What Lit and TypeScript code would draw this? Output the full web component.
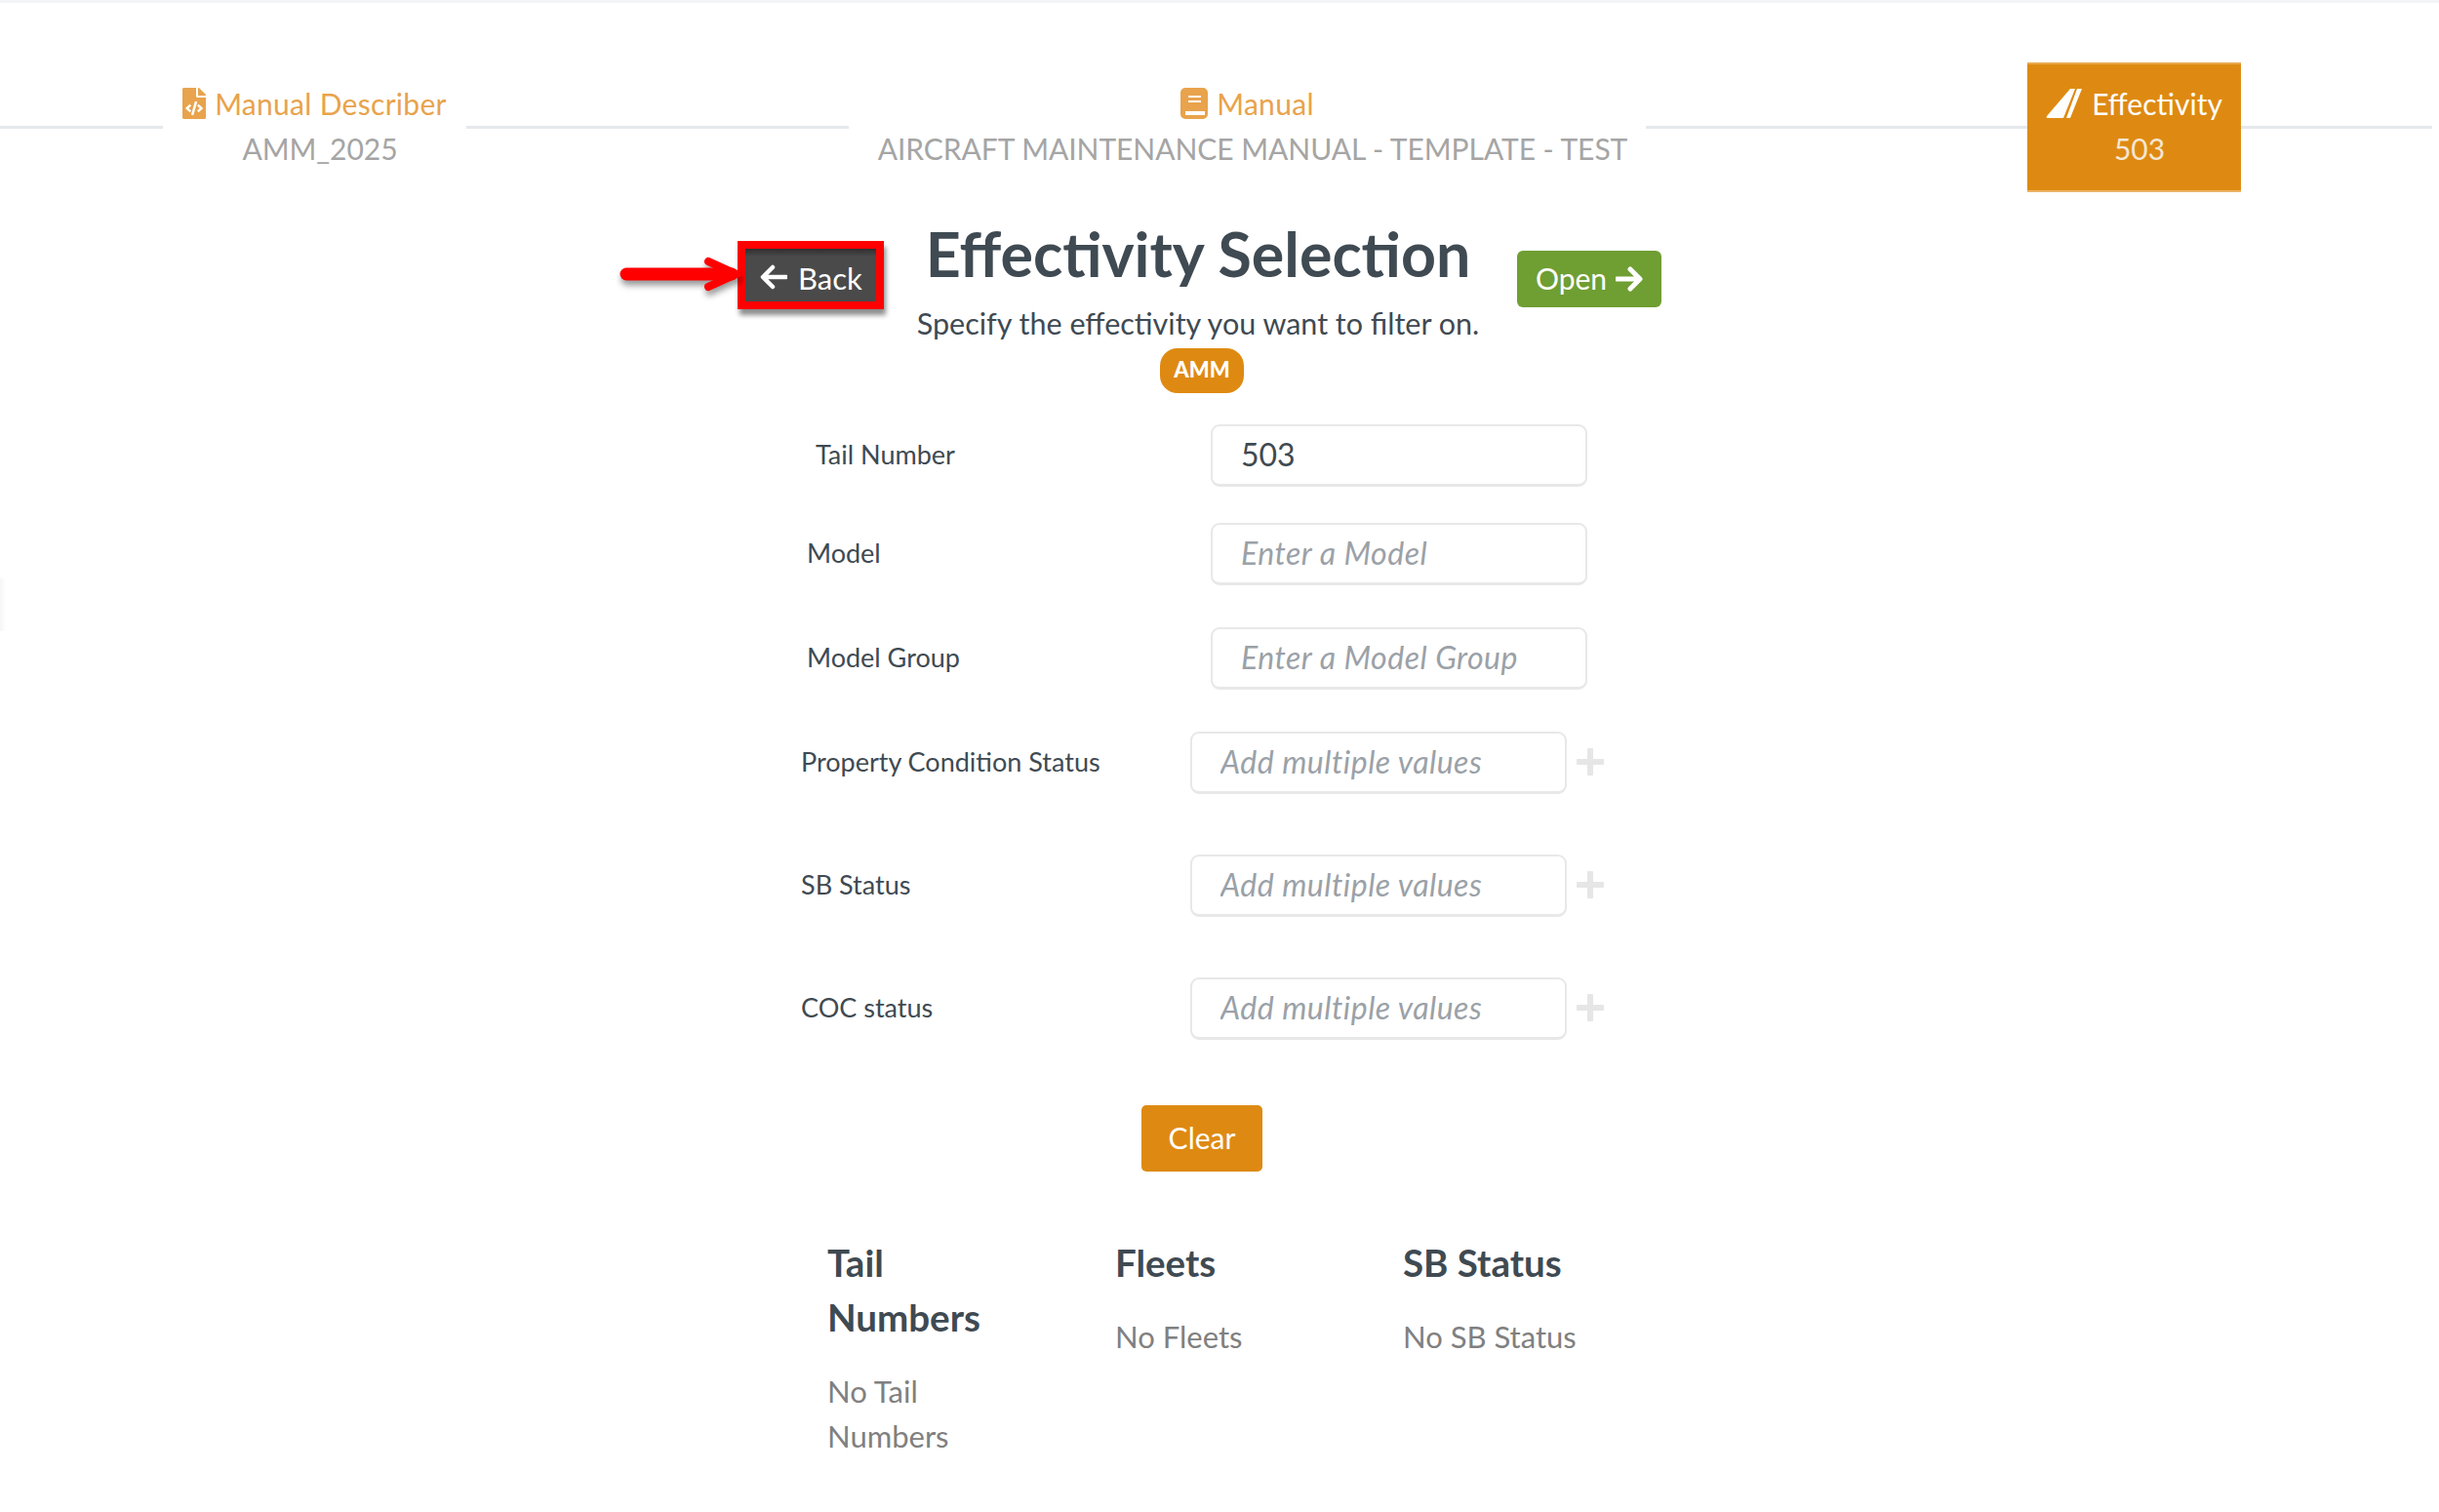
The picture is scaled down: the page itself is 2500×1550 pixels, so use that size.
import { LitElement, html, css, svg } from 'lit';
import { customElement } from 'lit/decorators.js';

const fileCode = svg`<path d="M384 121.941V128H256V0h6.059c6.365 0 12.47 2.529 16.971 7.029l97.941 97.941A24.005 24.005 0 0 1 384 121.941zM248 160c-13.2 0-24-10.8-24-24V0H24C10.745 0 0 10.745 0 24v464c0 13.255 10.745 24 24 24h336c13.255 0 24-10.745 24-24V160H248zM123.206 400.505a5.4 5.4 0 0 1-7.633.246l-64.866-60.812a5.4 5.4 0 0 1 0-7.879l64.866-60.812a5.4 5.4 0 0 1 7.633.246l19.579 20.885a5.4 5.4 0 0 1-.372 7.747L101.65 336l40.763 35.874a5.4 5.4 0 0 1 .372 7.747l-19.579 20.884zm51.295 50.479l-27.453-7.97a5.402 5.402 0 0 1-3.681-6.692l61.44-211.626a5.402 5.402 0 0 1 6.692-3.681l27.452 7.97a5.4 5.4 0 0 1 3.68 6.692l-61.44 211.626a5.397 5.397 0 0 1-6.69 3.681zm160.792-111.045l-64.866 60.812a5.4 5.4 0 0 1-7.633-.246l-19.58-20.885a5.4 5.4 0 0 1 .372-7.747L284.35 336l-40.763-35.874a5.4 5.4 0 0 1-.372-7.747l19.58-20.885a5.4 5.4 0 0 1 7.633-.246l64.866 60.812a5.4 5.4 0 0 1-.001 7.879z"/>`;

const multiFields = ['Property Condition Status', 'SB Status', 'COC status'];

@customElement('app-root')
export class AppRoot extends LitElement {
    static styles = css`
    :host {
      display: block;
      position: relative;
      min-height: 1550px;
      box-sizing: border-box;
      background: #fff;
      border-top: 3px solid #f3f4f5;
      font-family: Lato, "Liberation Sans", sans-serif;
      color: #3f4a52;
      overflow: hidden;
    }
    .edge-tab {
      position: absolute;
      left: 0;
      top: 590px;
      width: 6px;
      height: 54px;
      background: linear-gradient(to right, #f6f6f6, #fff);
    }
    .crumbs {
      display: flex;
      align-items: center;
      height: 133px;
      margin-top: 61px;
      width: 2493px;
    }
    .rule {
      height: 3px;
      background: #e5e9ec;
    }
    .crumb {
      display: flex;
      flex-direction: column;
      align-items: center;
      box-sizing: border-box;
      padding-bottom: 2px;
      font-size: 30px;
      line-height: 47px;
      color: #a5a5a5;
      white-space: nowrap;
    }
    .crumb-sub {
      padding-left: 11px;
      margin-top: -1px;
      letter-spacing: -0.05px;
    }
    .crumb-title {
      display: flex;
      align-items: center;
      gap: 9px;
      color: #e8a34c;
      letter-spacing: 0.3px;
    }
    .crumb-title svg {
      width: 24px;
      height: 32px;
      fill: #e8a34c;
      margin-top: -2px;
    }
    .crumb.active {
      height: 133px;
      justify-content: center;
      background: #de8a12;
      border-top: 2px solid #e9a94f;
      border-bottom: 2px solid #e9b465;
      color: #f4e6d2;
    }
    .crumb.active .crumb-title {
      color: #fff;
      letter-spacing: 0;
    }
    .crumb.active svg {
      width: 38px;
      height: 32px;
      fill: #fff;
    }
    .title-row {
      display: flex;
      align-items: flex-start;
      margin: 31px 0 0 756px;
    }
    .back-wrap {
      position: relative;
      margin-top: 19px;
    }
    .pointer {
      position: absolute;
      left: -121px;
      top: 14px;
      width: 124px;
      height: 40px;
      filter: drop-shadow(1px 5px 3px rgba(0, 0, 0, 0.4));
    }
    .back {
      display: flex;
      align-items: center;
      gap: 11px;
      box-sizing: border-box;
      width: 150px;
      height: 70px;
      padding: 4px 0 0 15px;
      border: 8px solid #f00;
      background: linear-gradient(#2f2f2f, #4a4a4a 8px);
      box-shadow: 2px 6px 5px rgba(0, 0, 0, 0.45);
      color: #fff;
      font-size: 31px;
    }
    .back span {
      margin-top: 2px;
    }
    .back svg,
    .open svg {
      width: 28px;
      height: 26px;
      flex: none;
    }
    .heading {
      width: 644px;
      padding-bottom: 3px;
      margin-top: -1px;
      text-align: center;
    }
    .heading h1 {
      margin: 0 0 15px;
      font-size: 62.7px;
      line-height: 66px;
      font-weight: 700;
    }
    .heading p {
      margin: 0;
      font-size: 30.5px;
      line-height: 46px;
    }
    .open {
      display: flex;
      align-items: center;
      justify-content: center;
      gap: 9px;
      box-sizing: border-box;
      width: 148px;
      height: 58px;
      margin: 29px 0 0 5px;
      padding-bottom: 3px;
      background: #6f9e32;
      border-radius: 6px;
      color: #fff;
      font-size: 30px;
    }
    .open svg {
      margin-top: 3px;
    }
    .badge-row {
      display: flex;
      justify-content: center;
      width: 2464px;
    }
    .badge {
      width: 86px;
      height: 46px;
      line-height: 43px;
      text-align: center;
      background: #de8a12;
      border-radius: 18px;
      color: #fff;
      font-size: 22px;
      font-weight: 900;
    }
    .form {
      display: flex;
      flex-direction: column;
      margin-top: 32px;
    }
    .field {
      display: flex;
      align-items: center;
      height: 64px;
      font-size: 27px;
    }
    .field label {
      flex: none;
      margin-top: -3px;
    }
    .tail { padding-left: 836px; margin-bottom: 37px; }
    .tail label { width: 405px; }
    .model { padding-left: 827px; margin-bottom: 43px; }
    .model label { width: 414px; }
    .multi { padding-left: 821px; margin-bottom: 62px; gap: 10px; }
    .multi:last-child { margin-bottom: 0; }
    .multi label { width: 389px; }
    input {
      box-sizing: border-box;
      width: 386px;
      height: 64px;
      padding: 0 29px 2px;
      border: 2px solid #e8e8e8;
      border-bottom-width: 3px;
      border-radius: 9px;
      outline: none;
      color: #3f4a52;
      font: 32px Lato, "Liberation Sans", sans-serif;
    }
    input::placeholder {
      color: #9ba1a7;
      font-style: italic;
      letter-spacing: 0.5px;
      opacity: 1;
    }
    .plus {
      width: 28px;
      height: 28px;
      fill: #e6e6e6;
      margin-top: -2px;
    }
    .clear-row {
      display: flex;
      justify-content: center;
      width: 2464px;
      margin-top: 67px;
    }
    .clear {
      width: 124px;
      height: 68px;
      line-height: 66px;
      text-align: center;
      background: #de8a12;
      border-radius: 5px;
      color: #fff;
      font-size: 30px;
    }
    .lists {
      display: grid;
      grid-template-columns: repeat(3, 295px);
      margin: 65px 0 0 848px;
    }
    .lists h3 {
      width: 200px;
      margin: 0 0 25px;
      font-size: 38.5px;
      line-height: 56px;
      font-weight: 700;
    }
    .lists p {
      width: 180px;
      margin: 0;
      font-size: 31px;
      line-height: 46px;
      color: #808080;
    }
    `;

    render() {
        return html`
      <div class="edge-tab"></div>
      <div class="crumbs">
        <div class="rule" style="width:167px"></div>
        <div class="crumb" style="width:311px">
          <div class="crumb-title">
            <svg viewBox="0 0 384 512">${fileCode}</svg>
            Manual Describer
          </div>
          <div class="crumb-sub">AMM_2025</div>
        </div>
        <div class="rule" style="width:392px"></div>
        <div class="crumb" style="width:817px">
          <div class="crumb-title">
            <svg viewBox="0 0 28 32" style="width:28px">
              <path fill-rule="evenodd" d="M5 0h18a5 5 0 0 1 5 5v22a5 5 0 0 1-5 5H5a5 5 0 0 1-5-5V5a5 5 0 0 1 5-5zM8 8v2h13V8zM8 13v2h13v-2zM5 24v4h20v-4z"/>
            </svg>
            Manual
          </div>
          <div class="crumb-sub">AIRCRAFT MAINTENANCE MANUAL - TEMPLATE - TEST</div>
        </div>
        <div class="rule" style="width:391px"></div>
        <div class="crumb active" style="width:219px">
          <div class="crumb-title">
            <svg viewBox="0 0 38 32">
              <path d="M25 1h5L18 31H2q-2 0-1-2z M32 1h5L25 31h-4z"/>
            </svg>
            Effectivity
          </div>
          <div class="crumb-sub">503</div>
        </div>
        <div class="rule" style="flex:1"></div>
      </div>

      <div class="title-row">
        <div class="back-wrap">
          <svg class="pointer" viewBox="0 0 124 40">
            <path d="M7 20h108" stroke="#f00" stroke-width="13" stroke-linecap="round" fill="none"/>
            <path d="M91 7l29 13-29 13" stroke="#f00" stroke-width="8" fill="none" stroke-linecap="round"/>
          </svg>
          <div class="back">
            <svg viewBox="0 0 28 26"><path d="M13 3L3 13l10 10M4 13h23" stroke="#fff" stroke-width="4.5" stroke-linecap="round" stroke-linejoin="round" fill="none"/></svg>
            <span>Back</span>
          </div>
        </div>
        <div class="heading">
          <h1>Effectivity Selection</h1>
          <p>Specify the effectivity you want to filter on.</p>
        </div>
        <div class="open">
          Open
          <svg viewBox="0 0 28 26"><path d="M15 3l10 10-10 10M24 13H1" stroke="#fff" stroke-width="5" stroke-linecap="round" stroke-linejoin="round" fill="none"/></svg>
        </div>
      </div>

      <div class="badge-row"><div class="badge">AMM</div></div>

      <div class="form">
        <div class="field tail">
          <label>Tail Number</label>
          <input .value=${'503'} />
        </div>
        <div class="field model">
          <label>Model</label>
          <input placeholder="Enter a Model" />
        </div>
        <div class="field model">
          <label>Model Group</label>
          <input placeholder="Enter a Model Group" />
        </div>
        ${multiFields.map(name => html`
          <div class="field multi">
            <label>${name}</label>
            <input placeholder="Add multiple values" />
            <svg class="plus" viewBox="0 0 28 28"><path d="M11 1a1 1 0 0 1 1-1h4a1 1 0 0 1 1 1v10h10a1 1 0 0 1 1 1v4a1 1 0 0 1-1 1H17v10a1 1 0 0 1-1 1h-4a1 1 0 0 1-1-1V17H1a1 1 0 0 1-1-1v-4a1 1 0 0 1 1-1h10z"/></svg>
          </div>
        `)}
      </div>

      <div class="clear-row"><div class="clear">Clear</div></div>

      <div class="lists">
        <div><h3>Tail Numbers</h3><p>No Tail Numbers</p></div>
        <div><h3>Fleets</h3><p>No Fleets</p></div>
        <div><h3>SB Status</h3><p>No SB Status</p></div>
      </div>
    `;
    }
}
